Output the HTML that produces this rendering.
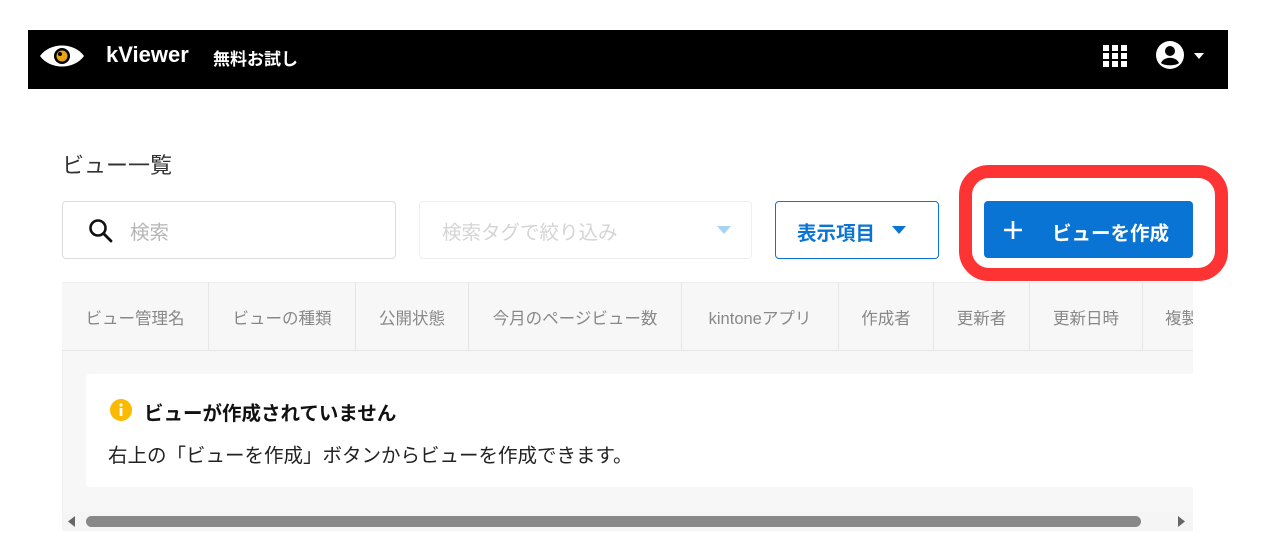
<!DOCTYPE html>
<html><head><meta charset="utf-8"><style>
*{box-sizing:border-box;margin:0;padding:0}
body{width:1280px;height:553px;background:#fff;position:relative;overflow:hidden;font-family:"Liberation Sans","Noto Sans CJK JP",sans-serif;color:#222}
.abs{position:absolute}
.bar{left:28px;top:30px;width:1200px;height:59px;background:#000}
.title{left:62px;top:148px;font-size:22px;color:#333}
.box{border:1px solid #dcdcdc;border-radius:4px;height:58px;top:201px}
.ph{font-size:19.5px;color:#b5b5b5;top:216px}
.th{top:282px;height:69px;background:#f7f7f7;border-top:1px solid #eee;border-bottom:1px solid #e6e6e6;border-right:1px solid #e6e6e6;font-size:16.5px;color:#888;display:flex;align-items:center;justify-content:center;white-space:nowrap;overflow:hidden}
</style></head><body>
<div class="abs bar"></div>
<svg class="abs" style="left:38px;top:42px" width="48" height="28" viewBox="0 0 48 28"><path d="M2 14 C12 0 36 0 46 14 C36 28 12 28 2 14Z" fill="#fff"/><circle cx="24" cy="14" r="8" fill="#000"/><circle cx="24" cy="14" r="5.5" fill="#e8a317"/><circle cx="22" cy="12" r="2" fill="#000"/></svg>
<div class="abs" style="left:106px;top:42px;color:#fff;font-size:22px;font-weight:bold">kViewer</div>
<div class="abs" style="left:213px;top:45px;color:#fff;font-size:17px;font-weight:bold">無料お試し</div>
<svg class="abs" style="left:1103px;top:45px" width="24" height="22"><g fill="#fff"><rect x="0" y="0" width="6" height="6"/><rect x="9" y="0" width="6" height="6"/><rect x="18" y="0" width="6" height="6"/><rect x="0" y="8" width="6" height="6"/><rect x="9" y="8" width="6" height="6"/><rect x="18" y="8" width="6" height="6"/><rect x="0" y="16" width="6" height="6"/><rect x="9" y="16" width="6" height="6"/><rect x="18" y="16" width="6" height="6"/></g></svg>
<svg class="abs" style="left:1156px;top:41px" width="54" height="30"><circle cx="14" cy="14" r="14" fill="#fff"/><circle cx="14" cy="10" r="5" fill="#000"/><path d="M5 22 C8 15 20 15 23 22 C20 25 8 25 5 22Z" fill="#000"/><path d="M38 12 L48 12 L43 18Z" fill="#fff"/></svg>
<div class="abs title">ビュー一覧</div>
<div class="abs box" style="left:62px;width:334px"></div>
<svg class="abs" style="left:88px;top:218px" width="26" height="26"><circle cx="10" cy="10" r="7.5" fill="none" stroke="#111" stroke-width="2.6"/><path d="M15.5 15.5 L23 23" stroke="#111" stroke-width="2.8" stroke-linecap="round"/></svg>
<div class="abs ph" style="left:130px">検索</div>
<div class="abs box" style="left:419px;width:333px;border-color:#eee"></div>
<div class="abs ph" style="left:442px;color:#d4d4d4">検索タグで絞り込み</div>
<svg class="abs" style="left:717px;top:226px" width="14" height="8"><path d="M0 0H14L7 8Z" fill="#a9d3f2"/></svg>
<div class="abs box" style="left:775px;width:164px;border-color:#0a74d4"></div>
<div class="abs" style="left:797px;top:217px;font-size:19.5px;font-weight:bold;color:#0a74d4">表示項目</div>
<svg class="abs" style="left:892px;top:226px" width="14" height="8"><path d="M0 0H14L7 8Z" fill="#0a74d4"/></svg>
<div class="abs" style="left:959px;top:165px;width:269px;height:116px;border:13px solid #fe3434;border-radius:30px"></div>
<div class="abs" style="left:984px;top:201px;width:209px;height:57px;background:#0a74d4;border-radius:4px"></div>
<svg class="abs" style="left:1003px;top:220px" width="20" height="20"><path d="M10 1V19M1 10H19" stroke="#fff" stroke-width="2.6"/></svg>
<div class="abs" style="left:1052px;top:217px;font-size:19.5px;font-weight:bold;color:#fff">ビューを作成</div>
<div class="abs" style="left:62px;top:282px;width:1131px;height:230px;background:#f7f7f7;border-left:1px solid #eee"></div>
<div class="abs th" style="left:62px;width:147px">ビュー管理名</div>
<div class="abs th" style="left:209px;width:147px">ビューの種類</div>
<div class="abs th" style="left:356px;width:113px">公開状態</div>
<div class="abs th" style="left:469px;width:213px">今月のページビュー数</div>
<div class="abs th" style="left:682px;width:157px">kintoneアプリ</div>
<div class="abs th" style="left:839px;width:95px">作成者</div>
<div class="abs th" style="left:934px;width:96px">更新者</div>
<div class="abs th" style="left:1030px;width:113px">更新日時</div>
<div class="abs th" style="left:1143px;width:50px;justify-content:flex-start;padding-left:22px;border-right:none">複製</div>
<div class="abs" style="left:86px;top:374px;width:1107px;height:113px;background:#fff;border-radius:4px 0 0 4px"></div>
<svg class="abs" style="left:110px;top:399px" width="22" height="22"><circle cx="11" cy="11" r="11" fill="#fbb900"/><rect x="9.6" y="9" width="2.8" height="8" fill="#fff"/><circle cx="11" cy="6" r="1.6" fill="#fff"/></svg>
<div class="abs" style="left:144px;top:397px;font-size:19.5px;font-weight:bold;color:#111">ビューが作成されていません</div>
<div class="abs" style="left:108px;top:439px;font-size:19.5px;color:#222">右上の「ビューを作成」ボタンからビューを作成できます。</div>
<div class="abs" style="left:62px;top:512px;width:1131px;height:19px;background:#f5f5f5"></div>
<svg class="abs" style="left:67px;top:515px" width="10" height="13"><path d="M8 1V12L1 6.5Z" fill="#666"/></svg>
<div class="abs" style="left:86px;top:516px;width:1055px;height:11px;background:#888;border-radius:6px"></div>
<svg class="abs" style="left:1176px;top:515px" width="10" height="13"><path d="M2 1V12L9 6.5Z" fill="#666"/></svg>
</body></html>
